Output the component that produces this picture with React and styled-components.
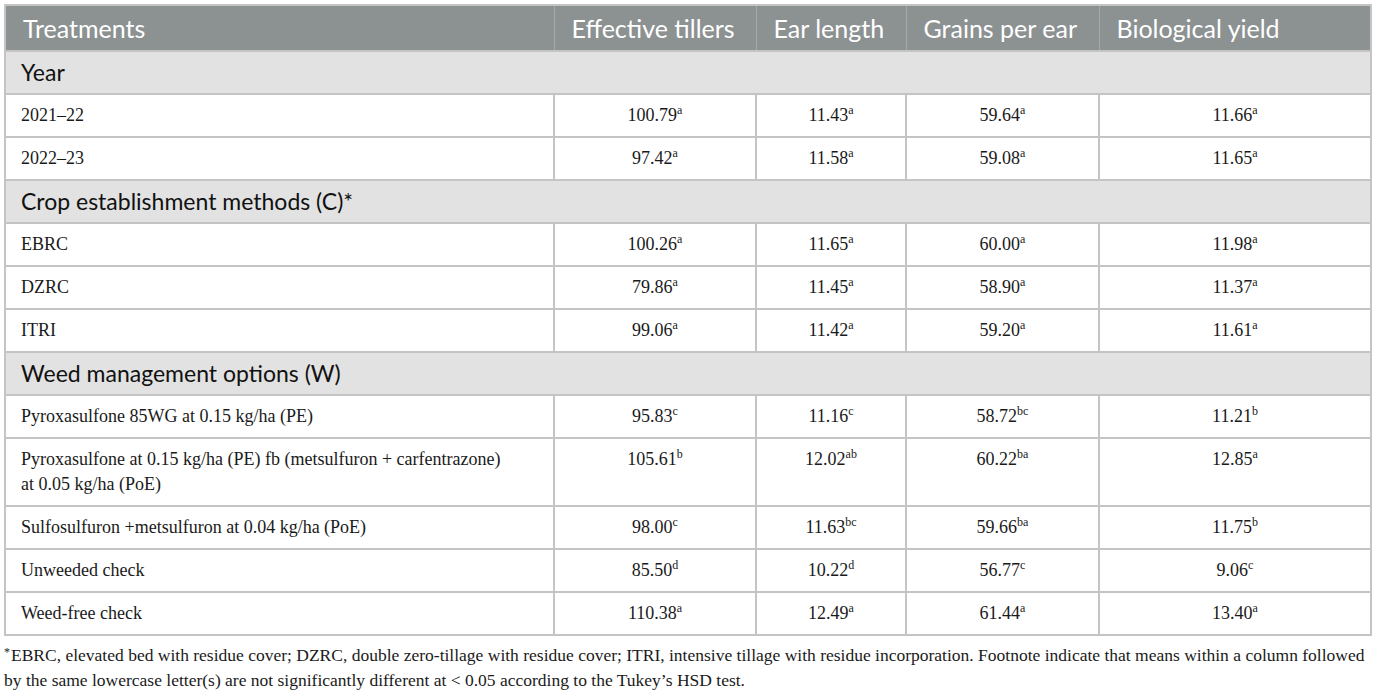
import React from "react";
import styled, { createGlobalStyle } from "styled-components";

const Global = createGlobalStyle`
  body {
    margin: 0;
    background: #ffffff;
  }
`;

const rows = [
  { section: "Year" },
  { name: "2021–22", v: [["100.79", "a"], ["11.43", "a"], ["59.64", "a"], ["11.66", "a"]] },
  { name: "2022–23", v: [["97.42", "a"], ["11.58", "a"], ["59.08", "a"], ["11.65", "a"]] },
  { section: "Crop establishment methods (C)*" },
  { name: "EBRC", v: [["100.26", "a"], ["11.65", "a"], ["60.00", "a"], ["11.98", "a"]] },
  { name: "DZRC", v: [["79.86", "a"], ["11.45", "a"], ["58.90", "a"], ["11.37", "a"]] },
  { name: "ITRI", v: [["99.06", "a"], ["11.42", "a"], ["59.20", "a"], ["11.61", "a"]] },
  { section: "Weed management options (W)" },
  { name: "Pyroxasulfone 85WG at 0.15 kg/ha (PE)", v: [["95.83", "c"], ["11.16", "c"], ["58.72", "bc"], ["11.21", "b"]] },
  {
    name: "Pyroxasulfone at 0.15 kg/ha (PE) fb (metsulfuron + carfentrazone) at 0.05 kg/ha (PoE)",
    v: [["105.61", "b"], ["12.02", "ab"], ["60.22", "ba"], ["12.85", "a"]],
  },
  { name: "Sulfosulfuron +metsulfuron at 0.04 kg/ha (PoE)", v: [["98.00", "c"], ["11.63", "bc"], ["59.66", "ba"], ["11.75", "b"]] },
  { name: "Unweeded check", v: [["85.50", "d"], ["10.22", "d"], ["56.77", "c"], ["9.06", "c"]] },
  { name: "Weed-free check", v: [["110.38", "a"], ["12.49", "a"], ["61.44", "a"], ["13.40", "a"]] },
];

const headers = ["Treatments", "Effective tillers", "Ear length", "Grains per ear", "Biological yield"];
const widths = [549, 202, 150, 193, 272];

const App = () => {
  return (
    <Page>
      <Global />
      <Table>
        <colgroup>
          {widths.map((w, i) => (
            <col key={i} style={{ width: w }} />
          ))}
        </colgroup>
        <thead>
          <tr>
            {headers.map((h) => (
              <Th key={h}>{h}</Th>
            ))}
          </tr>
        </thead>
        <tbody>
          {rows.map((r, i) =>
            r.section ? (
              <tr key={i}>
                <Section colSpan={5}>{r.section}</Section>
              </tr>
            ) : (
              <tr key={i}>
                <Name>{r.name}</Name>
                {r.v.map(([n, s], j) => (
                  <Num key={j}>
                    {n}
                    <Sup>{s}</Sup>
                  </Num>
                ))}
              </tr>
            )
          )}
        </tbody>
      </Table>
      <Footnote>
        <Star>*</Star>EBRC, elevated bed with residue cover; DZRC, double zero-tillage with residue cover; ITRI,
        intensive tillage with residue incorporation. Footnote indicate that means within a column followed
        <br />
        by the same lowercase letter(s) are not significantly different at &lt; 0.05 according to the Tukey’s HSD test.
      </Footnote>
    </Page>
  );
};

export default App;

const Page = styled.div`
  padding: 4px 5px 0 4px;
  width: 1366px;
`;

const Table = styled.table`
  width: 1366px;
  table-layout: fixed;
  border-collapse: collapse;
  border: 2px solid #c4c4c4;
`;

const Th = styled.th`
  background-color: #8c9192;
  color: #ffffff;
  font-family: Lato, "Open Sans", sans-serif;
  font-weight: 400;
  font-size: 25px;
  line-height: 28px;
  text-align: left;
  padding: 8px 17px 8px 17px;
  border-left: 1px solid #a4a8a9;
  white-space: nowrap;
  &:first-child {
    border-left: none;
  }
`;

const Section = styled.td`
  background-color: #e1e2e1;
  color: #111;
  font-family: Lato, "Open Sans", sans-serif;
  font-size: 23px;
  line-height: 25px;
  padding: 8px 15px 8px 15px;
  border-top: 2px solid #c4c4c4;
`;

const Cell = styled.td`
  font-family: "Liberation Serif", "Times New Roman", serif;
  font-size: 18px;
  line-height: 25px;
  color: #1a1a1a;
  padding: 8px 15px 8px 15px;
  border: 2px solid #c4c4c4;
  vertical-align: top;
`;

const Name = styled(Cell)`
  text-align: left;
  padding-right: 50px;
`;

const Num = styled(Cell)`
  text-align: center;
`;

const Sup = styled.sup`
  font-size: 12px;
  line-height: 0;
  vertical-align: 7px;
`;

const Footnote = styled.p`
  margin: 4px 0 0 0;
  font-family: "Liberation Serif", "Times New Roman", serif;
  font-size: 17.5px;
  line-height: 25px;
  color: #1a1a1a;
  white-space: nowrap;
`;

const Star = styled.span`
  font-size: 12px;
  vertical-align: 5px;
  margin-right: 1px;
`;
